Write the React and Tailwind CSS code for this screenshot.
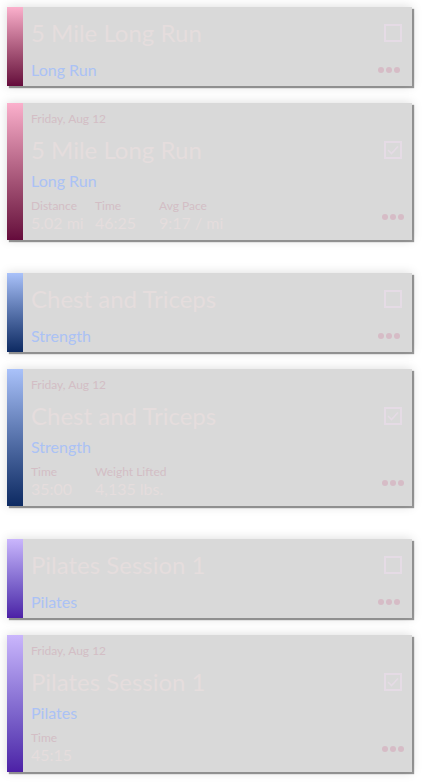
import React from 'react'

const GRADIENTS = {
  pink: 'bg-gradient-to-b from-[#fbb0cc] to-[#650a3c]',
  blue: 'bg-gradient-to-b from-[#aac2fa] to-[#0d2a62]',
  purple: 'bg-gradient-to-b from-[#cab6fc] to-[#4d1fa6]',
}

const groups = [
  {
    title: '5 Mile Long Run',
    type: 'Long Run',
    color: 'pink',
    stats: [
      ['Distance', '5.02 mi'],
      ['Time', '46:25'],
      ['Avg Pace', '9:17 / mi'],
    ],
  },
  {
    title: 'Chest and Triceps',
    type: 'Strength',
    color: 'blue',
    stats: [
      ['Time', '35:00'],
      ['Weight Lifted', '4,135 lbs.'],
    ],
  },
  {
    title: 'Pilates Session 1',
    type: 'Pilates',
    color: 'purple',
    stats: [['Time', '45:15']],
  },
]

function Checkbox({ checked }) {
  return (
    <div className="w-[18px] h-[18px] border-2 border-[#e5dbe5] flex items-center justify-center">
      {checked && (
        <svg width="12" height="10" viewBox="0 0 12 10" fill="none">
          <path d="M1 5 L4.5 8.5 L11 1.5" stroke="#e5dbe5" strokeWidth="1.6" />
        </svg>
      )}
    </div>
  )
}

function Dots() {
  return (
    <div className="flex gap-[2px]">
      <span className="w-[6px] h-[6px] rounded-full bg-[#d6bcc6]" />
      <span className="w-[6px] h-[6px] rounded-full bg-[#d6bcc6]" />
      <span className="w-[6px] h-[6px] rounded-full bg-[#d6bcc6]" />
    </div>
  )
}

function Card({ item, done }) {
  return (
    <div className="flex ml-[7px] w-[405px] bg-[#d9d9d9] shadow-[2px_2px_1px_rgba(0,0,0,0.4),0_0_10px_rgba(0,0,0,0.15)]">
      <div className={`w-4 shrink-0 ${GRADIENTS[item.color]}`} />
      <div className="flex-1 pl-2 pr-[10px]">
        {done ? (
          <div className="pt-[8px] pb-[8px]">
            <p className="text-[12px] leading-[16px] text-[#d3bec5]">Friday, Aug 12</p>
            <div className="flex items-center justify-between mt-[8px]">
              <p className="text-[24px] leading-[30px] text-[#e5dddd]">{item.title}</p>
              <Checkbox checked />
            </div>
            <p className="text-[16px] leading-[20px] text-[#abc2f5] mt-[6px]">{item.type}</p>
            <div className="flex items-end justify-between mt-[8px]">
              <div className="flex">
                {item.stats.map(([label, value]) => (
                  <div key={label} className="w-16">
                    <p className="text-[12px] leading-[14px] text-[#d3bec5] whitespace-nowrap">{label}</p>
                    <p className="text-[16px] leading-[18px] text-[#e5dddd] whitespace-nowrap mt-[1px]">{value}</p>
                  </div>
                ))}
              </div>
              <div className="pb-[12px] -mr-[2px]">
                <Dots />
              </div>
            </div>
          </div>
        ) : (
          <div className="pt-[11px] pb-[6px]">
            <div className="flex items-center justify-between">
              <p className="text-[24px] leading-[30px] text-[#e5dddd]">{item.title}</p>
              <Checkbox />
            </div>
            <div className="flex items-center justify-between mt-[12px]">
              <p className="text-[16px] leading-[20px] text-[#abc2f5]">{item.type}</p>
              <div className="pr-[2px]">
                <Dots />
              </div>
            </div>
          </div>
        )}
      </div>
    </div>
  )
}

export default function App() {
  return (
    <div className="bg-white min-h-screen pt-[7px] font-['Lato',sans-serif]">
      {groups.map((item) => (
        <div key={item.title} className="flex flex-col gap-[17px] mb-[33px]">
          <Card item={item} />
          <Card item={item} done />
        </div>
      ))}
    </div>
  )
}
